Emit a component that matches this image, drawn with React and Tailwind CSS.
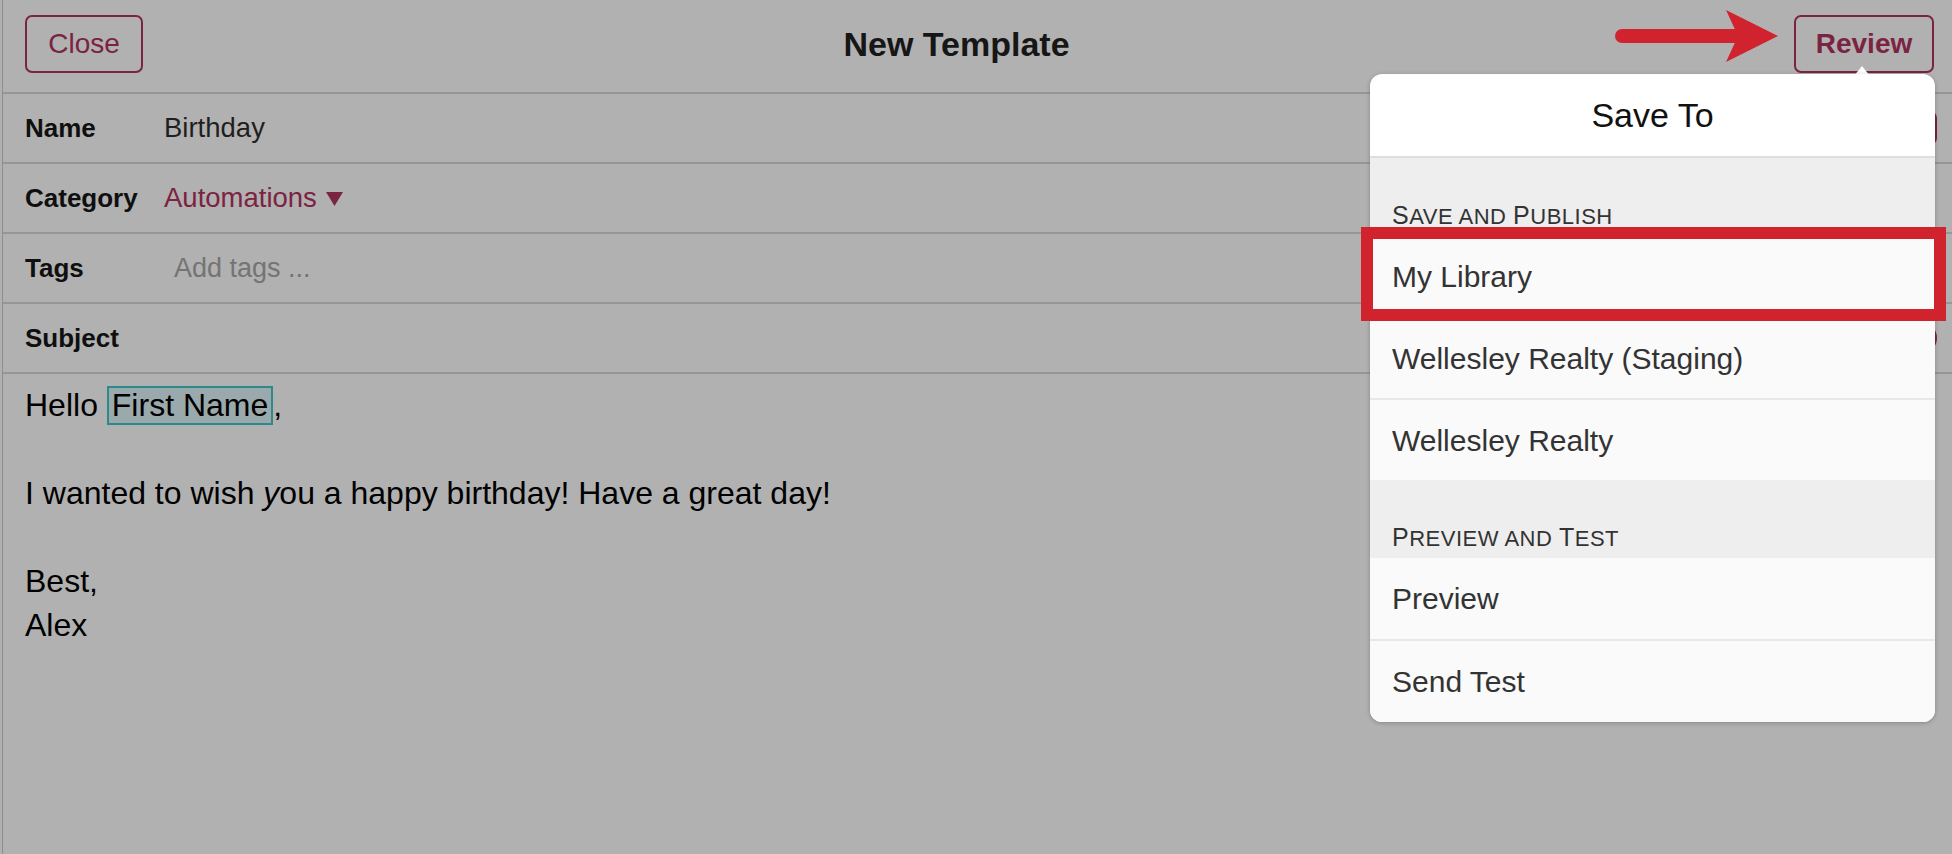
import React from 'react';

const font = { fontFamily: '"Liberation Sans", Arial, sans-serif' };

const FormRow = ({ label, children, right }) => (
  <div className="flex h-[70px] items-center border-b-2 border-[#969696] pl-[22px]">
    <div className="w-[139px] text-[26px] font-bold text-[#0f0f0f]">{label}</div>
    <div className="flex flex-1 items-center text-[27.5px]">{children}</div>
    {right}
  </div>
);

// small caps drawn by hand: big first letters, smaller capitals for the rest
const SectionHeader = ({ words }) => (
  <div className="flex h-[78px] items-end bg-[#eeeeee] pb-[8px] pl-[22px]">
    <span className="leading-none tracking-[0.5px] text-[#333]">
      {words.map((w, i) => (
        <span key={i}>
          {i > 0 && <span className="text-[22px]"> </span>}
          {w.big ? (
            <>
              <span className="text-[25px]">{w.text[0]}</span>
              <span className="text-[22px]">{w.text.slice(1)}</span>
            </>
          ) : (
            <span className="text-[22px]">{w.text}</span>
          )}
        </span>
      ))}
    </span>
  </div>
);

const Item = ({ children, divider, h = 'h-[81px]' }) => (
  <div
    className={`flex ${h} items-center bg-[#fafafa] pl-[22px] text-[30px] text-[#333] ${
      divider ? 'border-t-2 border-[#e8e8e8]' : ''
    }`}
  >
    {children}
  </div>
);

const App = () => {
  return (
    <div className="relative h-[854px] w-full overflow-hidden bg-[#b1b1b1]" style={font}>
      <div className="ml-[2px] h-full border-l border-[#8e8e8e]">
        {/* Header */}
        <div className="flex h-[94px] items-center justify-between border-b-2 border-[#969696] pb-[4px] pl-[22px] pr-[18px]">
          <button className="h-[58px] w-[118px] rounded-[7px] border-2 border-[#7b2342] text-[28px] text-[#7b2342]">
            Close
          </button>
          <h1 className="mr-[24px] text-[34px] font-bold text-[#161616]">New Template</h1>
          <button className="h-[58px] w-[140px] rounded-[7px] border-2 border-[#7b2342] text-[28px] font-bold text-[#7b2342]">
            Review
          </button>
        </div>

        {/* Fields */}
        <FormRow
          label="Name"
          right={<div className="mr-[15px] h-[34px] w-[36px] rounded-[7px] border-2 border-[#7b2342]" />}
        >
          <span className="text-[#1f1f1f]">Birthday</span>
        </FormRow>
        <FormRow label="Category">
          <span className="text-[#7b2342]">Automations</span>
          <svg className="ml-[9px] mt-[2px]" width="17" height="14" viewBox="0 0 17 14">
            <polygon points="0,0 17,0 8.5,14" fill="#7b2342" />
          </svg>
        </FormRow>
        <FormRow label="Tags">
          <span className="pl-[10px] text-[27px] text-[#747474]">Add tags ...</span>
        </FormRow>
        <FormRow
          label="Subject"
          right={<div className="mr-[15px] h-[32px] w-[32px] rounded-full border-2 border-[#7b2342]" />}
        />

        {/* Body */}
        <div className="pl-[22px] pt-[9px] text-[32px] leading-[44px] text-black">
          <div>
            Hello{' '}
            <span className="inline-block border-2 border-[#2d8a8c] bg-[#9aa9ab] px-[3px] leading-[35px]">
              First Name
            </span>
            ,
          </div>
          <div>&nbsp;</div>
          <div>
            I wanted to wish <i>y</i>ou a happy birthday! Have a great day!
          </div>
          <div>&nbsp;</div>
          <div>Best,</div>
          <div>Alex</div>
        </div>
      </div>

      {/* Red arrow annotation */}
      <svg className="absolute left-[1600px] top-0" width="190" height="80" viewBox="0 0 190 80">
        <line x1="22" y1="36" x2="135" y2="36" stroke="#d0232e" strokeWidth="14" strokeLinecap="round" />
        <polygon points="126,10 178,36 126,62 138,36" fill="#d0232e" />
      </svg>

      {/* Popover caret */}
      <svg className="absolute left-[1854px] top-[64px]" width="16" height="12" viewBox="0 0 16 12">
        <polygon points="0,12 8,2 16,12" fill="#ffffff" />
      </svg>

      {/* Save To popover */}
      <div className="absolute left-[1370px] top-[74px] w-[565px] overflow-hidden rounded-[12px] bg-white shadow-[0_1px_4px_rgba(0,0,0,0.25)]">
        <div className="flex h-[82px] items-center justify-center text-[34px] text-[#111]">Save To</div>
        <div className="h-[2px] bg-[#dedede]" />
        <SectionHeader
          words={[
            { text: 'SAVE', big: true },
            { text: 'AND' },
            { text: 'PUBLISH', big: true },
          ]}
        />
        <Item>My Library</Item>
        <Item divider>Wellesley Realty (Staging)</Item>
        <Item divider h="h-[82px]">
          Wellesley Realty
        </Item>
        <SectionHeader
          words={[
            { text: 'PREVIEW', big: true },
            { text: 'AND' },
            { text: 'TEST', big: true },
          ]}
        />
        <Item>Preview</Item>
        <Item divider h="h-[83px]">
          Send Test
        </Item>
      </div>

      {/* Red highlight box */}
      <div className="absolute left-[1361px] top-[227px] h-[94px] w-[585px] border-[12px] border-[#d0232e]" />
    </div>
  );
};

export default App;
